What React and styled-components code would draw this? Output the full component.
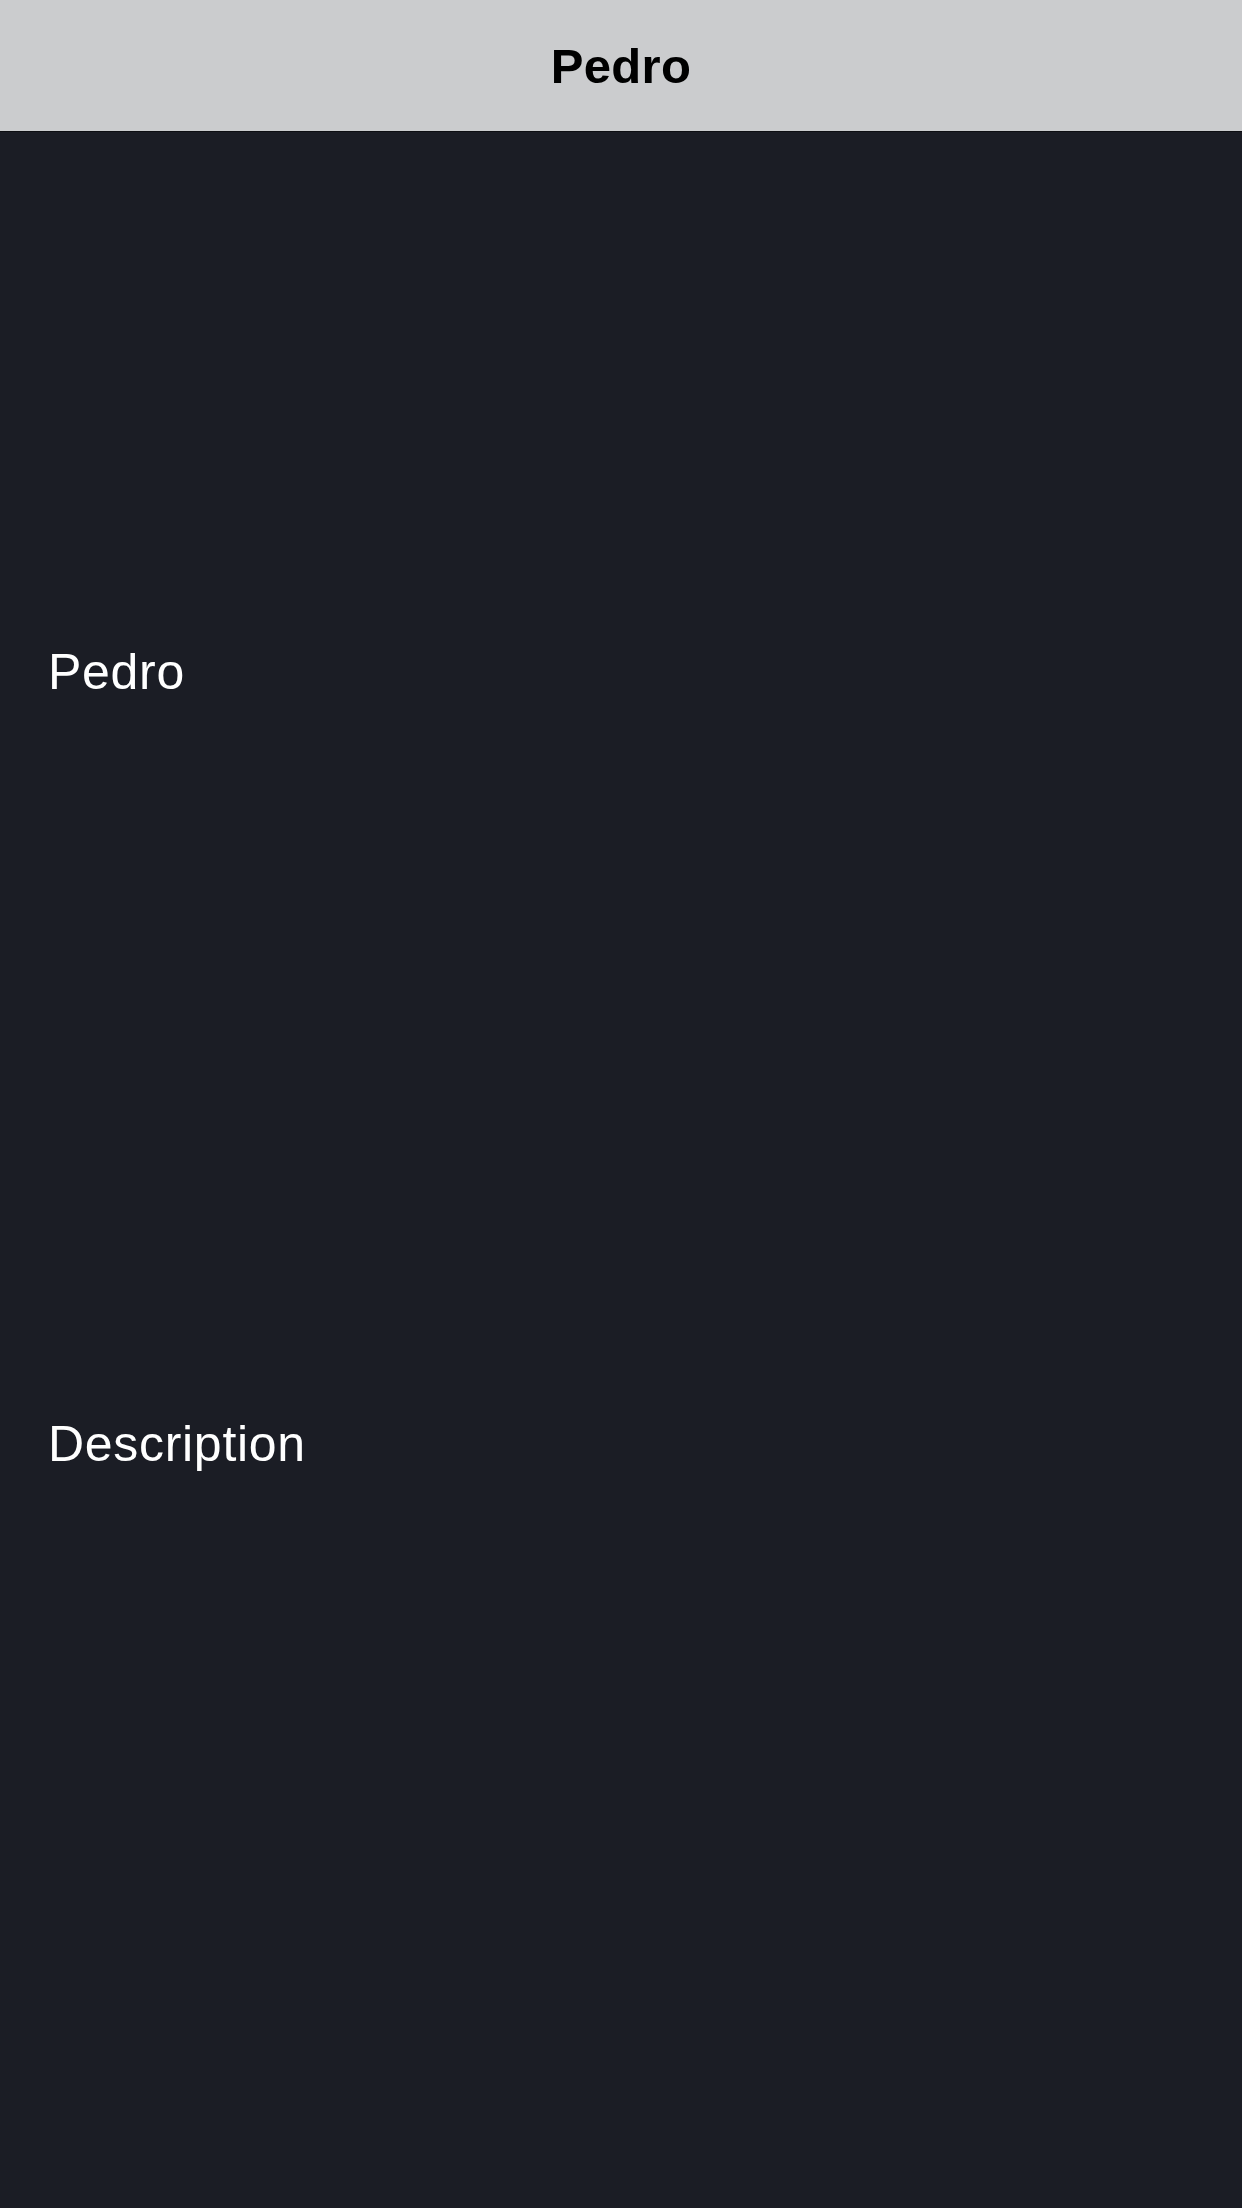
import React from "react";
import styled, { createGlobalStyle } from "styled-components";

const palette = {
  bg: "#1b1d25",
  header: "#cbccce",
  border: "#0e0f13",
  text: "#ffffff",
  title: "#000000",
};

const GlobalStyle = createGlobalStyle`
  html, body {
    margin: 0;
    padding: 0;
    background: ${palette.bg};
  }
  body {
    font-family: "Liberation Sans", Arial, Helvetica, sans-serif;
  }
  * {
    box-sizing: border-box;
  }
`;

const Screen = styled.div`
  width: 1242px;
  min-height: 2208px;
  background: ${palette.bg};
  display: flex;
  flex-direction: column;
`;

const NavBar = styled.header`
  height: 132px;
  background: ${palette.header};
  border-bottom: 1px solid ${palette.border};
  display: flex;
  align-items: center;
  justify-content: center;
  padding-top: 1px;
`;

const NavTitle = styled.h1`
  margin: 0;
  font-size: 49px;
  font-weight: 700;
  letter-spacing: 0.3px;
  color: ${palette.title};
`;

const Content = styled.main`
  flex: 1;
  display: flex;
  flex-direction: column;
  gap: 714px;
  padding: 511px 48px 0;
`;

const Label = styled.p`
  margin: 0;
  font-size: 50px;
  font-weight: 400;
  letter-spacing: 0.7px;
  color: ${palette.text};
`;

function App() {
  return (
    <>
      <GlobalStyle />
      <Screen>
        <NavBar>
          <NavTitle>Pedro</NavTitle>
        </NavBar>
        <Content>
          <Label>Pedro</Label>
          <Label>Description</Label>
        </Content>
      </Screen>
    </>
  );
}

export default App;
